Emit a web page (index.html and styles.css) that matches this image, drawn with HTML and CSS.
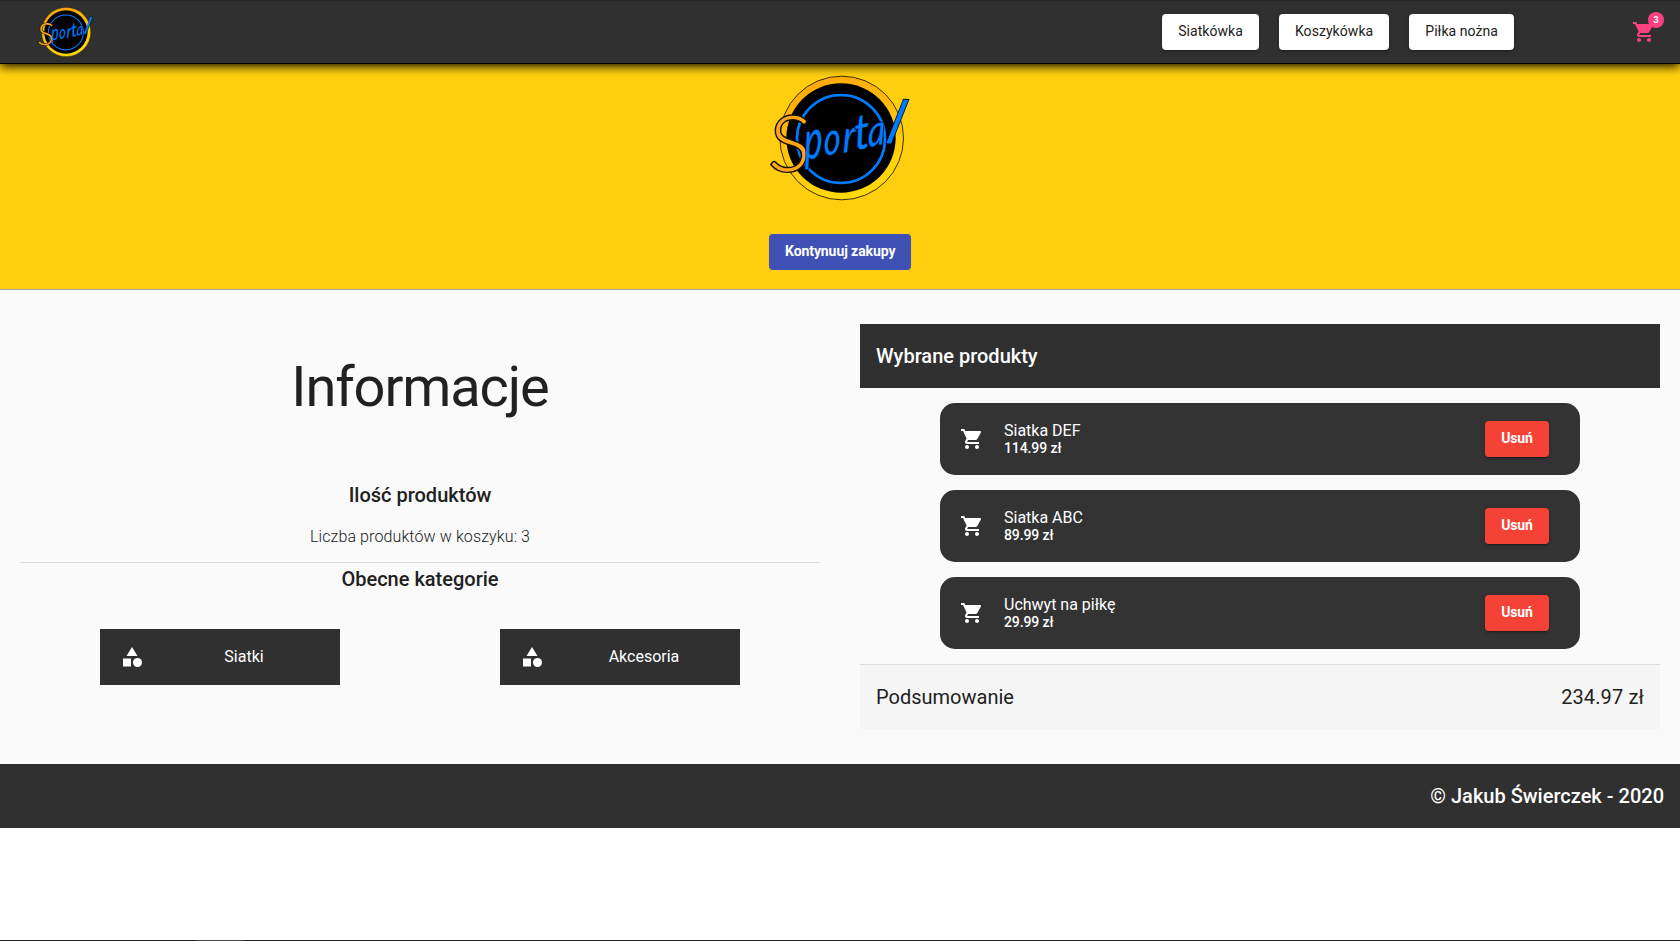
FILE: index.html
```html
<!DOCTYPE html>
<html lang="pl">
<head>
<meta charset="utf-8">
<title>Sportal</title>
<link rel="stylesheet" href="styles.css">
</head>
<body>
<svg class="defs" width="0" height="0" aria-hidden="true">
  <defs>
    <linearGradient id="gold" x1="0" y1="0" x2="0.35" y2="1"><stop offset="0" stop-color="#ffa30a"/><stop offset="1" stop-color="#ffd90a"/></linearGradient>
    <symbol id="cart" viewBox="0 0 24 24"><path d="M7 18c-1.1 0-1.99.9-1.99 2S5.9 22 7 22s2-.9 2-2-.9-2-2-2zM1 2v2h2l3.6 7.59-1.35 2.45c-.16.28-.25.61-.25.96 0 1.1.9 2 2 2h12v-2H7.42c-.14 0-.25-.11-.25-.25l.03-.12.9-1.63h7.45c.75 0 1.41-.41 1.75-1.03l3.58-6.49c.08-.14.12-.31.12-.48 0-.55-.45-1-1-1H5.21l-.94-2H1zm16 16c-1.1 0-1.99.9-1.99 2s.89 2 1.99 2 2-.9 2-2-.9-2-2-2z"/></symbol>
    <symbol id="category" viewBox="0 0 24 24"><path d="M12 2l-5.5 9h11z"/><circle cx="17.5" cy="17.5" r="4.5"/><path d="M3 13.5h8v8H3z"/></symbol>
    <symbol id="logo" viewBox="87 46 426 378">
      <circle cx="305" cy="235" r="185.500" fill="url(#gold)" stroke="#3a2c00" stroke-width="3"/>
      <circle cx="303" cy="235" r="164" fill="#000"/>
      <circle cx="303" cy="238" r="132" fill="none" stroke="#007bff" stroke-width="8"/>
      <g class="word">
        <text class="gold" transform="translate(84 334) skewX(-3)" font-size="232">S</text>
        <text class="blue" transform="translate(194 302) rotate(-12) skewX(-10) scale(.72 1.08)" font-size="148">p</text>
        <text class="blue" transform="translate(253 290) rotate(-14) skewX(-12) scale(.76 1)" font-size="132">o</text>
        <text class="blue" transform="translate(308 280) rotate(-12) skewX(-12) scale(.88 1)" font-size="132">r</text>
        <text class="blue" transform="translate(346 272) rotate(-12) skewX(-8) scale(.95 1.05)" font-size="138">t</text>
        <text class="blue" transform="translate(384 263) rotate(-12) skewX(-12) scale(.82 1)" font-size="126">a</text>
        <text class="blue" transform="translate(434 251) rotate(2) skewX(-14) scale(.9 1.02)" font-size="176">l</text>
      </g>
    </symbol>
  </defs>
</svg>

<header class="topbar">
  <svg class="topbar-logo"><use href="#logo"/></svg>
  <nav class="nav">
    <button class="btn">Siatkówka</button>
    <button class="btn">Koszykówka</button>
    <button class="btn">Piłka nożna</button>
  </nav>
  <div class="cart"><svg class="icon"><use href="#cart"/></svg><span class="badge">3</span></div>
</header>

<section class="hero">
  <svg class="hero-logo"><use href="#logo"/></svg>
  <button class="btn primary">Kontynuuj zakupy</button>
</section>

<main class="content">
  <section class="info">
    <h1>Informacje</h1>
    <h3 class="count-title">Ilość produktów</h3>
    <p>Liczba produktów w koszyku: 3</p>
    <h3 class="cat-title">Obecne kategorie</h3>
    <div class="cats">
      <div class="cat"><svg class="icon"><use href="#category"/></svg><span>Siatki</span></div>
      <div class="cat"><svg class="icon"><use href="#category"/></svg><span>Akcesoria</span></div>
    </div>
  </section>
  <section class="products">
    <h2>Wybrane produkty</h2>
    <ul>
      <li><svg class="icon"><use href="#cart"/></svg><div class="item"><span class="name">Siatka DEF</span><span class="price">114.99 zł</span></div><button class="btn warn">Usuń</button></li>
      <li><svg class="icon"><use href="#cart"/></svg><div class="item"><span class="name">Siatka ABC</span><span class="price">89.99 zł</span></div><button class="btn warn">Usuń</button></li>
      <li><svg class="icon"><use href="#cart"/></svg><div class="item"><span class="name">Uchwyt na piłkę</span><span class="price">29.99 zł</span></div><button class="btn warn">Usuń</button></li>
    </ul>
    <div class="total"><span>Podsumowanie</span><span class="sum">234.97 zł</span></div>
  </section>
</main>

<footer class="footer">© Jakub Świerczek - 2020</footer>
<div class="edge"><span></span></div>
</body>
</html>
```
FILE: styles.css
```css
* { box-sizing: border-box; }
body { margin: 0; height: 941px; display: flex; flex-direction: column; overflow: hidden; background: #fff; color: #212121; font-family: Roboto, "Liberation Sans", sans-serif; }
h1, h2, h3, p, ul { margin: 0; padding: 0; }
.defs { position: absolute; }
.icon { width: 24px; height: 24px; fill: currentColor; flex: none; display: block; }

.topbar { height: 64px; flex: none; display: flex; align-items: center; padding: 0 24px 0 37px; background: #303030; border-top: 1px solid #262626; border-bottom: 1px solid #000; box-shadow: 0 2px 10px 0 #000; position: relative; z-index: 1; }
.topbar-logo { width: 57px; height: 50px; }
.nav { display: flex; gap: 20px; margin-left: auto; }
.btn { height: 36px; padding: 0 16px 1px; border: 0; border-radius: 4px; background: #fff; color: #212121; font: 400 14px/35px Roboto, sans-serif; white-space: nowrap; box-shadow: 0 3px 1px -2px rgba(0,0,0,.2), 0 2px 2px rgba(0,0,0,.14), 0 1px 5px rgba(0,0,0,.12); }
.nav .btn { letter-spacing: .06px; }
.cart { position: relative; margin-left: 118px; width: 24px; height: 24px; color: #ff4081; }
.badge { position: absolute; top: -8px; right: -8px; width: 16px; height: 16px; border-radius: 50%; background: #ff4081; color: #fff; font-size: 9px; font-weight: 700; line-height: 16px; text-align: center; }

.hero { height: 226px; flex: none; display: flex; flex-direction: column; align-items: center; padding-top: 11px; background: #ffcf0f; border-bottom: 1px solid #a9a9a9; }
.hero-logo { width: 142px; height: 126px; margin-bottom: 33px; }
.primary { width: 142px; background: #3f51b5; color: #fff; font-weight: 700; letter-spacing: -.08px; box-shadow: none; }

.word { font-family: Lato, sans-serif; font-weight: 400; font-style: italic; }
.word text { paint-order: stroke; }
.gold { fill: #ffa61a; stroke: #171000; stroke-width: 9; font-weight: 300; font-style: normal; }
.blue { fill: #007bff; stroke: #00102a; stroke-width: 6; }

.content { height: 474px; flex: none; display: grid; grid-template-columns: 800px 800px; gap: 40px; padding: 34px 20px 35px; background: #fafafa; }
.info { text-align: center; }
h1 { padding-top: 35px; font-size: 56px; font-weight: 400; line-height: 56px; letter-spacing: -1.12px; }
h3 { font-size: 20px; font-weight: 500; line-height: 32px; }
.count-title { margin-top: 64px; }
.info p { margin-top: 14px; height: 38px; font-size: 16px; font-weight: 300; line-height: 24px; letter-spacing: .11px; border-bottom: 1px solid #dcdcdc; }
.cats { display: flex; justify-content: space-around; padding: 0; margin-top: 34px; }
.cat { width: 240px; height: 56px; display: flex; align-items: center; padding: 0 16px 0 20px; background: #303030; color: #fff; font-size: 16px; }
.cat span { flex: 1; padding-left: 20px; line-height: 24px; }

.products h2 { height: 64px; padding-left: 16px; background: #303030; color: #fff; font-size: 20px; font-weight: 500; line-height: 64px; }
.products ul { list-style: none; display: flex; flex-direction: column; gap: 15px; padding: 15px 80px; }
.products li { height: 72px; display: flex; align-items: center; padding: 0 31px 0 20px; border-radius: 15px; background: #333; color: #fff; }
.item { flex: 1; display: flex; flex-direction: column; padding-left: 20px; }
.name { font-size: 16px; line-height: 19px; }
.price { font-size: 14px; font-weight: 500; line-height: 17px; letter-spacing: -.1px; }
.warn { width: 64px; background: #f44336; color: #fff; font-weight: 700; letter-spacing: -.15px; }
.total { height: 65px; display: flex; justify-content: space-between; padding: 0 16px; background: #f5f5f5; border-top: 1px solid #dcdcdc; font-size: 20px; line-height: 64px; }
.sum { letter-spacing: .12px; }

.footer { height: 64px; flex: none; padding-right: 16px; background: #303030; color: #fff; font-size: 20px; font-weight: 500; line-height: 64px; text-align: right; }
.edge { height: 1px; margin-top: auto; padding-left: 196px; background: #202020; }
.edge span { display: block; width: 48px; height: 1px; background: #4a4a4a; }
```
